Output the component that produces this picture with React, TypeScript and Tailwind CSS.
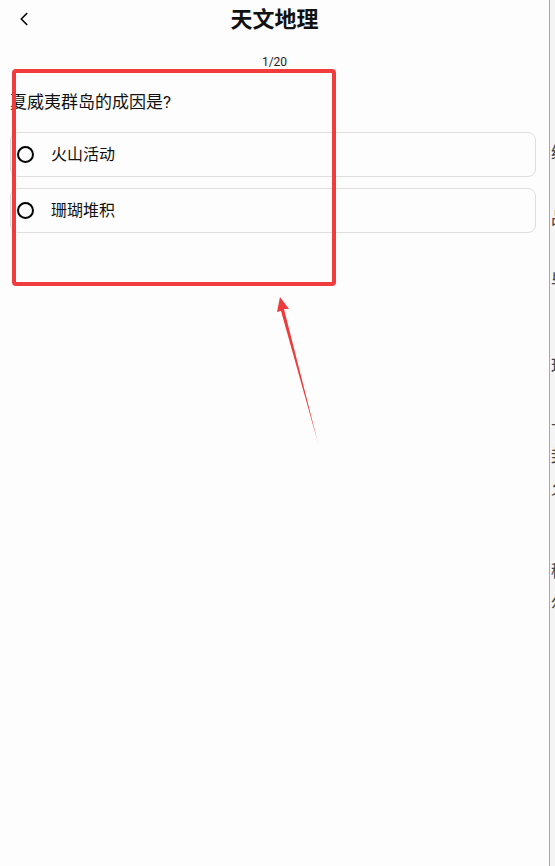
import React from "react";
import { ChevronLeft } from "lucide-react";

const options = ["火山活动", "珊瑚堆积"];

// fragments of the neighbouring page that peek in at the right edge
const edgeGlyphs = [
  { top: 145, ch: "绕" },
  { top: 210, ch: "品" },
  { top: 273, ch: "毕" },
  { top: 358, ch: "理" },
  { top: 418, ch: "十" },
  { top: 448, ch: "封" },
  { top: 480, ch: "允" },
  { top: 563, ch: "稀" },
  { top: 595, ch: "尔" },
];

export default function App() {
  return (
    <div
      className="relative flex w-[555px] h-[866px] bg-[#fdfdfd] overflow-hidden"
      style={{ fontFamily: 'Roboto, "Noto Sans CJK SC", sans-serif' }}
    >
      <div className="flex-1 flex flex-col">
        <div className="relative h-[40px] flex items-center justify-center">
          <ChevronLeft className="absolute left-[13px] top-[8px] w-[22px] h-[22px] text-black" strokeWidth={1.8} />
          <h1 className="text-[22px] font-bold text-[#111] leading-none">天文地理</h1>
        </div>
        <div className="mt-[16px] text-center text-[12px] leading-none text-[#222]">1/20</div>
        <div className="mt-[26px] pl-[10px] text-[17px] leading-none text-[#111]">夏威夷群岛的成因是?</div>
        <div className="mt-[21px] pl-[10px] pr-[13px] flex flex-col gap-[11px]">
          {options.map((o) => (
            <div
              key={o}
              className="h-[45px] flex items-center border border-[#dedede] rounded-[8px] bg-[#fdfdfd] pl-[6px]"
            >
              <span className="w-[17px] h-[17px] rounded-full border-[2px] border-black" />
              <span className="ml-[17px] text-[16px] text-[#111]">{o}</span>
            </div>
          ))}
        </div>
      </div>

      <div className="relative w-[6px] border-l border-[#a8a8a8] bg-[#f4f4f4] overflow-hidden">
        {edgeGlyphs.map((g) => (
          <span
            key={g.top}
            className="absolute left-[1px] text-[17px] leading-none text-[#444]"
            style={{ top: g.top }}
          >
            {g.ch}
          </span>
        ))}
      </div>

      {/* annotation overlay */}
      <div className="absolute left-[12px] top-[69px] w-[324px] h-[217px] border-[4px] border-[#f03c3c] rounded-[4px]" />
      <svg className="absolute left-0 top-0" width="555" height="866">
        <polygon points="280,297 277,312 281,311 318,443 284,309 289,309" fill="#ee3b3b" />
      </svg>
    </div>
  );
}
